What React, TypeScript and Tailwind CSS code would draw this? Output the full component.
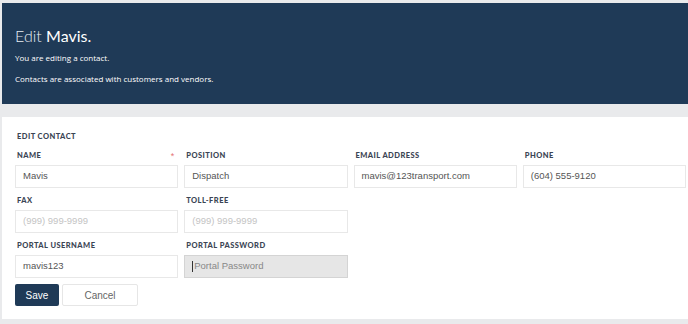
import React from 'react';

type FieldProps = {
  label: string;
  value?: string;
  placeholder?: string;
  required?: boolean;
  disabled?: boolean;
};

function Field({ label, value, placeholder, required, disabled }: FieldProps) {
  return (
    <div className="flex flex-col">
      <div className="h-[12px] flex items-center justify-between pl-[2px] pr-[4px] mb-[3px]">
        <span className="font-['Lato'] font-black text-[7.5px] tracking-[0.06em] text-[#3b4554] uppercase">{label}</span>
        {required && <span className="text-[#e57373] text-[9px] leading-none">*</span>}
      </div>
      <div
        className={
          disabled
            ? 'h-[23px] flex items-center px-[7px] border border-[#d4d4d4] bg-[#e6e6e6] text-[9.5px] text-[#888]'
            : 'h-[23px] flex items-center px-[7px] border border-[#e8e8e8] bg-white text-[9.5px] text-[#555]'
        }
      >
        {disabled ? (
          <span className="flex items-center">
            <span className="w-px h-[11px] bg-[#333] mr-px" />
            {placeholder}
          </span>
        ) : value ? (
          <span>{value}</span>
        ) : (
          <span className="text-[#c4c4c4]">{placeholder}</span>
        )}
      </div>
    </div>
  );
}

export default function App() {
  return (
    <div className="w-[688px] h-[324px] bg-[#e9eaec] pt-[3px] pl-[2px] font-['Liberation_Sans',Arial,sans-serif] overflow-hidden">
      <div className="h-[101px] bg-[#1f3a57] px-[13px] pt-[21px] text-white font-['Open_Sans',sans-serif]">
        <h1 className="text-[16px] leading-[24px] text-[#e8edf3] font-['Lato']">
          <span className="font-light">Edit </span>
          <span className="font-normal text-white">Mavis.</span>
        </h1>
        <p className="text-[8px] mt-[4px] leading-[12px]">You are editing a contact.</p>
        <p className="text-[8px] mt-[9px] leading-[12px]">Contacts are associated with customers and vendors.</p>
      </div>

      <div className="mt-[13px] h-[202px] bg-white pl-[13px] pr-[2px] pt-[14px]">
        <h2 className="h-[12px] flex items-center pl-[2px] font-['Lato'] font-black text-[7.5px] tracking-[0.06em] text-[#3b4554] uppercase">
          Edit Contact
        </h2>
        <div className="mt-[7px] grid grid-cols-4 gap-x-[6px] gap-y-[7px]">
          <Field label="Name" value="Mavis" required />
          <Field label="Position" value="Dispatch" />
          <Field label="Email Address" value="mavis@123transport.com" />
          <Field label="Phone" value="(604) 555-9120" />
          <Field label="Fax" placeholder="(999) 999-9999" />
          <Field label="Toll-Free" placeholder="(999) 999-9999" />
          <div />
          <div />
          <Field label="Portal Username" value="mavis123" />
          <Field label="Portal Password" placeholder="Portal Password" disabled />
        </div>
        <div className="mt-[6px] flex gap-[3px]">
          <button className="w-[44px] h-[22px] bg-[#1f3a57] text-white text-[10px] rounded-[2px]">Save</button>
          <button className="w-[76px] h-[22px] bg-white border border-[#e6e6e6] text-[#666] text-[10px] rounded-[2px]">Cancel</button>
        </div>
      </div>
    </div>
  );
}
